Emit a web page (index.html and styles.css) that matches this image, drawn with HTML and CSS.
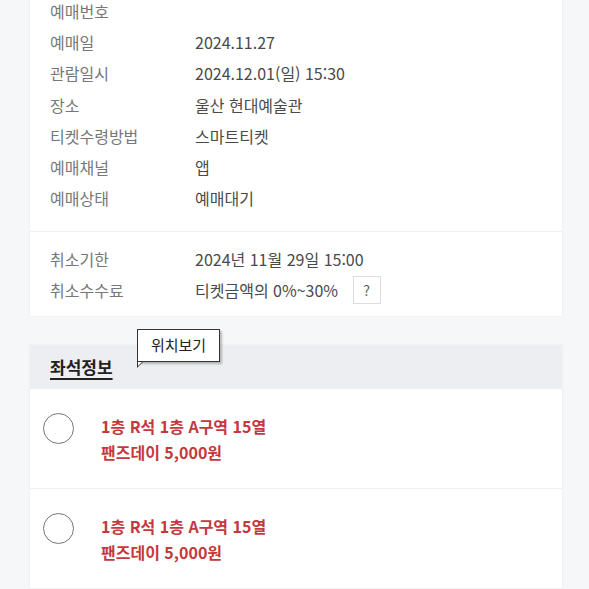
FILE: index.html
```html
<!DOCTYPE html>
<html lang="ko">
<head>
    <meta charset="UTF-8">
    <meta name="viewport" content="width=device-width, initial-scale=1.0">
    <title>예매상세</title>
    <link rel="stylesheet" href="styles.css">
</head>
<body>
    <div class="page">
        <!-- 예매 정보 -->
        <div class="card info-card">
            <div class="info-list">
                <div class="row"><span class="label">예매번호</span><span class="value"></span></div>
                <div class="row"><span class="label">예매일</span><span class="value">2024.11.27</span></div>
                <div class="row"><span class="label">관람일시</span><span class="value">2024.12.01(일) 15:30</span></div>
                <div class="row"><span class="label">장소</span><span class="value">울산 현대예술관</span></div>
                <div class="row"><span class="label">티켓수령방법</span><span class="value">스마트티켓</span></div>
                <div class="row"><span class="label">예매채널</span><span class="value">앱</span></div>
                <div class="row"><span class="label">예매상태</span><span class="value">예매대기</span></div>
            </div>
            <div class="info-list cancel-list">
                <div class="row"><span class="label">취소기한</span><span class="value">2024년 11월 29일 15:00</span></div>
                <div class="row"><span class="label">취소수수료</span><span class="value">티켓금액의 0%~30% <button class="help-btn">?</button></span></div>
            </div>
        </div>

        <!-- 좌석 정보 -->
        <div class="card seat-card">
            <div class="seat-header">
                <span class="seat-title">좌석정보</span>
                <div class="tooltip">위치보기</div>
            </div>
            <div class="seat-item">
                <span class="radio"></span>
                <div class="seat-text">
                    <p>1층 R석 1층 A구역 15열</p>
                    <p>팬즈데이 5,000원</p>
                </div>
            </div>
            <div class="seat-item">
                <span class="radio"></span>
                <div class="seat-text">
                    <p>1층 R석 1층 A구역 15열</p>
                    <p>팬즈데이 5,000원</p>
                </div>
            </div>
            <div class="seat-item"></div>
        </div>
    </div>
</body>
</html>
```

FILE: styles.css
```css
body {
    margin: 0;
    font-family: "Noto Sans CJK KR", "Noto Sans", sans-serif;
    background-color: #f6f7f9;
    color: #444;
}

.page {
    padding: 0 27px 0 30px;
    margin-top: -5px;
}

.card {
    background-color: #fff;
    box-shadow: 0 0 2px rgba(0, 0, 0, 0.08);
}

.info-list {
    padding: 0 20px 17px;
}

.cancel-list {
    border-top: 1px solid #eef0f2;
    padding-top: 11px;
    padding-bottom: 10px;
}

.row {
    display: flex;
    align-items: center;
    height: 31.3px;
    font-size: 16px;
}

.label {
    width: 145px;
    flex-shrink: 0;
    color: #777;
}

.value {
    display: flex;
    align-items: center;
    color: #4a4a4a;
    white-space: pre;
}

.help-btn {
    margin-left: 10px;
    width: 28px;
    height: 28px;
    padding: 0;
    border: 1px solid #ddd;
    background: #fff;
    color: #555;
    font-family: inherit;
    font-size: 14px;
}

.seat-card {
    margin-top: 29px;
    position: relative;
}

.seat-header {
    height: 44px;
    background-color: #eceef1;
    display: flex;
    align-items: center;
    padding: 0 20px;
}

.seat-title {
    font-size: 17px;
    font-weight: bold;
    color: #222;
    text-decoration: underline;
    text-decoration-thickness: 2px;
    text-underline-offset: 4px;
}

.tooltip {
    position: absolute;
    left: 107px;
    top: -16px;
    width: 81px;
    height: 31px;
    line-height: 30px;
    text-align: center;
    border: 1px solid #333;
    background: #fff;
    color: #222;
    font-size: 15px;
    box-shadow: 2px 2px 2px rgba(0, 0, 0, 0.25);
}

.tooltip::after {
    content: "";
    position: absolute;
    left: -1px;
    bottom: -7px;
    width: 0;
    height: 0;
    border-left: 6px solid #333;
    border-bottom: 6px solid transparent;
}

.tooltip::before {
    content: "";
    position: absolute;
    left: 0;
    bottom: -5px;
    width: 0;
    height: 0;
    border-left: 4px solid #fff;
    border-bottom: 4px solid transparent;
    z-index: 1;
}

.seat-item {
    display: flex;
    align-items: flex-start;
    padding: 24px 13px 23px;
    border-bottom: 1px solid #f0f1f3;
    min-height: 52px;
}

.radio {
    width: 29px;
    height: 29px;
    border: 1px solid #777;
    border-radius: 50%;
    flex-shrink: 0;
}

.seat-text {
    margin-left: 27px;
}

.seat-text p {
    margin: 0;
    font-size: 16px;
    line-height: 26px;
    font-weight: bold;
    color: #c4393d;
}
```
